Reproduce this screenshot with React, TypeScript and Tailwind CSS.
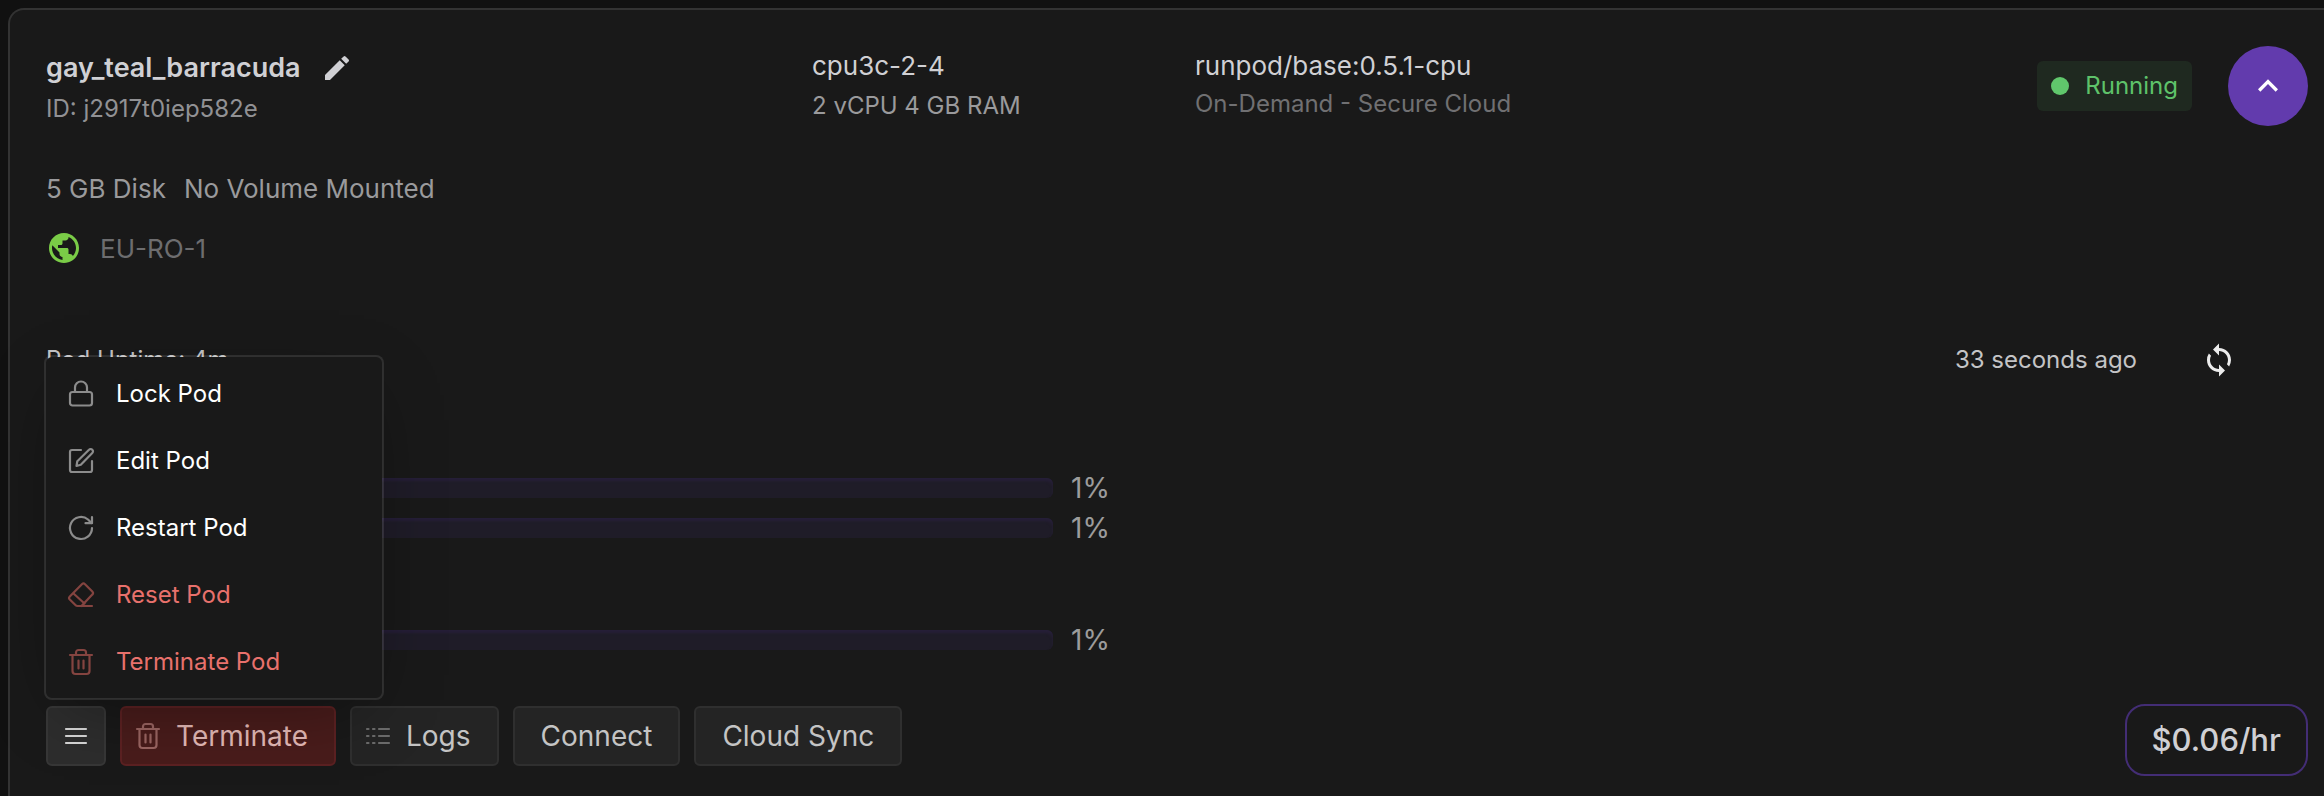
import type { ReactNode } from 'react';
import { MdEdit, MdExpandLess, MdPublic, MdSync } from 'react-icons/md';

interface IconProps {
  className?: string;
}

interface MenuItem {
  label: string;
  icon: (props: IconProps) => ReactNode;
  danger?: boolean;
}

function StrokeIcon({ className, children }: IconProps & { children: ReactNode }) {
  return (
    <svg
      viewBox="0 0 28 28"
      fill="none"
      stroke="currentColor"
      strokeWidth="2.2"
      strokeLinecap="round"
      strokeLinejoin="round"
      aria-hidden="true"
      className={`w-7 h-7 shrink-0 ${className ?? ''}`}
    >
      {children}
    </svg>
  );
}

function LockIcon({ className }: IconProps) {
  return (
    <StrokeIcon className={className}>
      <rect x="3" y="12" width="22" height="13.500" rx="2.5" />
      <path d="M8 12V7.500a6 6 0 0 1 12 0V12" />
    </StrokeIcon>
  );
}

function EditIcon({ className }: IconProps) {
  return (
    <StrokeIcon className={className}>
      <path d="M14 3H5A2 2 0 0 0 3 5V23a2 2 0 0 0 2 2h18a2 2 0 0 0 2-2v-9" />
      <path d="M9.500 19l.8-4.800L22 2.700a2.300 2.300 0 0 1 3.300 0 2.300 2.300 0 0 1 0 3.300L13.800 17.800z" />
    </StrokeIcon>
  );
}

function RestartIcon({ className }: IconProps) {
  return (
    <StrokeIcon className={className}>
      <path d="M25 14a11 11 0 1 1-4-8.500L24.500 9" />
      <path d="M25 3v6.200h-6.500" />
    </StrokeIcon>
  );
}

function EraserIcon({ className }: IconProps) {
  return (
    <StrokeIcon className={className}>
      <path d="M25 25H10.500a3 3 0 0 1-2.100-.9L2.800 18.500a2.200 2.200 0 0 1 0-3.100L14.900 3.200a2.200 2.200 0 0 1 3.100 0l7.300 7.300a2.200 2.200 0 0 1 0 3.100L14.500 25" />
      <path d="M6.500 12.500L17.500 22.500" />
    </StrokeIcon>
  );
}

function TrashIcon({ className }: IconProps) {
  return (
    <StrokeIcon className={className}>
      <path d="M3 7h22" />
      <path d="M9 7V4.500A2.500 2.500 0 0 1 11.500 2h5A2.500 2.500 0 0 1 19 4.500V7" />
      <path d="M5.500 7v16a3 3 0 0 0 3 3h11a3 3 0 0 0 3-3V7" />
      <path d="M11.500 12.500v8M16.500 12.500v8" />
    </StrokeIcon>
  );
}

function LogsIcon({ className }: IconProps) {
  return (
    <StrokeIcon className={className}>
      <path d="M3 7h1.500M9 7h1.500M15 7h10" />
      <path d="M3 14h1.500M9 14h1.500M15 14h10" />
      <path d="M3 21h1.500M9 21h1.500M15 21h10" />
    </StrokeIcon>
  );
}

function BarsIcon({ className }: IconProps) {
  return (
    <StrokeIcon className={className}>
      <path d="M4 7h20M4 14h20M4 21h20" />
    </StrokeIcon>
  );
}

const MENU: MenuItem[] = [
  { label: 'Lock Pod', icon: LockIcon },
  { label: 'Edit Pod', icon: EditIcon },
  { label: 'Restart Pod', icon: RestartIcon },
  { label: 'Reset Pod', icon: EraserIcon, danger: true },
  { label: 'Terminate Pod', icon: TrashIcon, danger: true },
];

function PodMenu() {
  return (
    <div
      role="menu"
      className="absolute -left-0.5 bottom-full z-10 mb-1.5 w-[340px] rounded-lg border-2 border-white/10 bg-[#191919] bg-clip-padding py-[3px] shadow-[0_20px_70px_-20px_rgba(0,0,0,0.4)]"
    >
      {MENU.map(({ label, icon: Icon, danger }) => (
        <button
          key={label}
          type="button"
          role="menuitem"
          className={`flex h-[67px] w-full items-center gap-[21px] px-[21px] text-2xl ${
            danger ? 'text-[#e8716c]' : 'text-white'
          }`}
        >
          <Icon className={danger ? 'text-[#844440]' : 'text-[#8c8c8c]'} />
          {label}
        </button>
      ))}
    </div>
  );
}

function UsageBar({ label, value }: { label: string; value: number }) {
  return (
    <div className="flex h-10 items-center gap-[18px]">
      <div
        role="progressbar"
        aria-label={label}
        aria-valuenow={value}
        className="h-5 flex-1 overflow-hidden rounded-md bg-[#1f1c28] shadow-[inset_0_3px_3px_#261f38]"
      >
        <div className="h-full bg-[#623bad]" style={{ width: `${value}%` }} />
      </div>
      <span className="w-[88px] text-[28px] text-[#9c9c9c]">{value}%</span>
    </div>
  );
}

const actionButton =
  'flex h-[60px] items-center rounded-md border-2 border-[#2f2f2f] bg-[#242424] text-[28px] text-[#c4c4c4]';

export default function App() {
  return (
    <div className="min-h-screen bg-[#111111] pl-2 pt-2 font-['Inter',sans-serif] text-[#9a9a9c]">
      <main className="rounded-tl-2xl border-l-2 border-t-2 border-[#333333] bg-[#191919] pb-5 pl-9 pr-4 pt-9">
        <header className="grid grid-cols-12 items-start gap-x-9">
          <div className="col-span-4">
            <div className="flex h-11 items-center gap-5">
              <h1 className="text-[27px] font-semibold text-[#d0d0d4]">gay_teal_barracuda</h1>
              <button type="button" aria-label="Rename pod" className="text-[#d0d0d4]">
                <MdEdit className="h-8 w-8" />
              </button>
            </div>
            <p className="text-2xl leading-[38px] text-[#919194]">ID: j2917t0iep582e</p>
          </div>
          <div className="col-span-2">
            <p className="text-[26px] leading-10 text-[#d0d0d4]">cpu3c-2-4</p>
            <p className="text-2xl leading-10">2 vCPU 4 GB RAM</p>
          </div>
          <div className="col-span-4">
            <p className="text-[26px] leading-10 text-[#d0d0d4]">runpod/base:0.5.1-cpu</p>
            <p className="text-2xl leading-9 text-[#707072]">On-Demand - Secure Cloud</p>
          </div>
          <div className="col-span-2 flex items-center justify-end gap-9">
            <div className="flex h-[50px] items-center gap-4 rounded-md bg-[#1f2920] px-3.5 text-2xl text-[#5ec26a]">
              <span className="h-[18px] w-[18px] rounded-full bg-[#60c76c]" />
              Running
            </div>
            <button
              type="button"
              aria-label="Collapse"
              className="flex h-20 w-20 items-center justify-center rounded-full bg-[#623bad] text-white"
            >
              <MdExpandLess className="h-10 w-10" />
            </button>
          </div>
        </header>

        <div className="mt-[41px] flex gap-[18px] text-[26px] leading-10">
          <span>5 GB Disk</span>
          <span>No Volume Mounted</span>
        </div>
        <div className="mt-[19px] flex h-10 items-center gap-[18px] text-[26px] text-[#6d6d6f]">
          <MdPublic className="h-9 w-9 text-[#7acc47]" />
          EU-RO-1
        </div>

        <div className="mt-[72px] flex h-10 items-center justify-between pr-[71px] text-2xl text-[#c4c4c6]">
          <span>Pod Uptime: 4m</span>
          <div className="flex items-center gap-16">
            <span>33 seconds ago</span>
            <button type="button" aria-label="Refresh" className="text-[#ececec]">
              <MdSync className="h-9 w-9" />
            </button>
          </div>
        </div>

        <section className="mt-[88px] grid grid-cols-2 gap-x-9">
          <div>
            <UsageBar label="CPU" value={1} />
            <UsageBar label="Memory" value={1} />
            <div className="mt-[72px]">
              <UsageBar label="Disk" value={1} />
            </div>
          </div>
        </section>

        <footer className="mt-11 flex items-start justify-between">
          <div className="flex gap-3.5 pt-0.5">
            <div className="relative">
              <button
                type="button"
                aria-label="More actions"
                aria-haspopup="menu"
                aria-expanded="true"
                className="flex h-[60px] w-[60px] items-center justify-center rounded-md border-2 border-[#373737] bg-[#2d2d2d] text-[#d6d6d6]"
              >
                <BarsIcon />
              </button>
              <PodMenu />
            </div>
            <button
              type="button"
              className="flex h-[60px] items-center gap-3.5 rounded-md border-2 border-[#5c2122] bg-[#491c1b] pl-3 pr-[26px] text-[28px] text-[#e3b9b6]"
            >
              <TrashIcon className="text-[#9a6562]" />
              Terminate
            </button>
            <button type="button" className={`${actionButton} gap-3.5 pl-3 pr-[26px]`}>
              <LogsIcon className="text-[#6c6c6c]" />
              Logs
            </button>
            <button type="button" className={`${actionButton} px-[26px]`}>
              Connect
            </button>
            <button type="button" className={`${actionButton} px-[26px]`}>
              Cloud Sync
            </button>
          </div>
          <div className="flex h-[72px] items-center rounded-[20px] border-2 border-[#432d75] px-[25px] text-[31px] font-medium text-[#d0d0d4]">
            $0.06/hr
          </div>
        </footer>
      </main>
    </div>
  );
}
